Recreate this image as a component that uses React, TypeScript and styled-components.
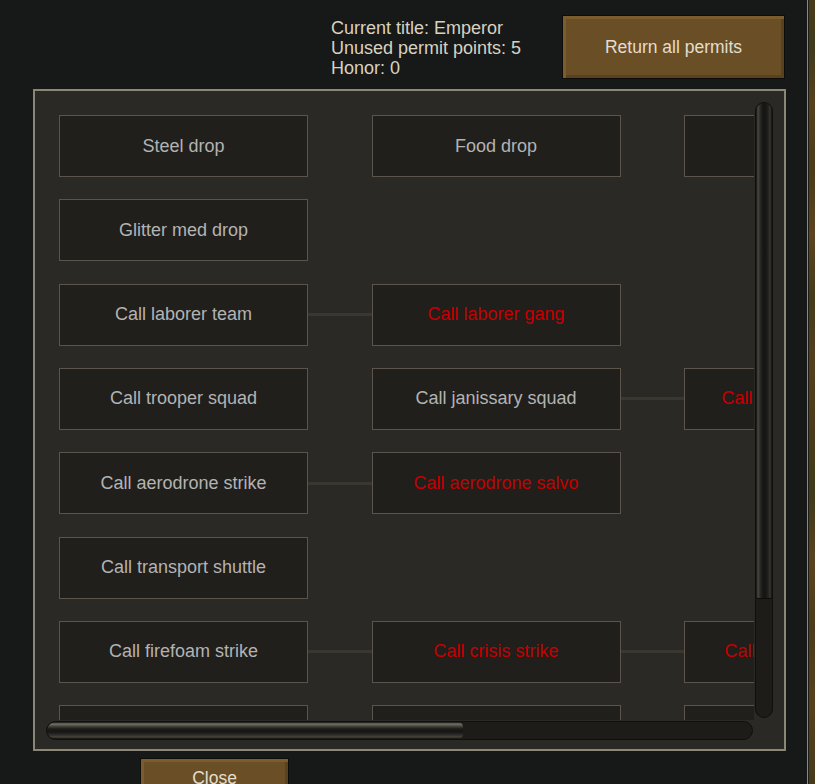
import React from "react";
import styled, { createGlobalStyle } from "styled-components";

const GlobalStyle = createGlobalStyle`
  html, body {
    margin: 0;
    padding: 0;
    background: #171918;
    overflow: hidden;
  }
  * { box-sizing: border-box; }
`;

const Page = styled.div`
  display: flex;
  width: 815px;
  height: 784px;
  overflow: hidden;
  background: #171918;
  font-family: "Liberation Sans", Arial, sans-serif;
`;

const Main = styled.div`
  width: 806px;
  display: flex;
  flex-direction: column;
`;

const Divider = styled.div`
  width: 3px;
  background: linear-gradient(90deg, #171918 0 1px, #8e897b 1px 2px, #20201b 2px);
`;

const Texture = styled.div`
  flex: 1;
  background:
    linear-gradient(
      180deg,
      #4b3a1c 0,
      #3f3a1d 6%,
      #56401f 13%,
      #4a3b1b 22%,
      #5c4322 30%,
      #443b1c 38%,
      #533f20 47%,
      #4a3a1b 55%,
      #3f3a1c 63%,
      #5a4221 72%,
      #4b3b1c 80%,
      #56401f 90%,
      #463a1c 100%
    );
`;

const Header = styled.div`
  display: flex;
  justify-content: flex-end;
  padding: 15px 21px 0 0;
  height: 79px;
`;

const Info = styled.div`
  width: 231px;
  padding-top: 3px;
  color: #d9d2c0;
  font-size: 18px;
  line-height: 20px;
`;

const BrownButton = styled.div<{ $w: number; $h: number }>`
  width: ${(p) => p.$w}px;
  height: ${(p) => p.$h}px;
  display: flex;
  align-items: center;
  justify-content: center;
  background: #6a4f26;
  border: 1px solid #0d0d0b;
  box-shadow: inset 3px 3px 0 #7a5c2e, inset -3px -3px 0 #59421f;
  color: #e4ddcd;
  font-size: 17.5px;
`;

const Panel = styled.div`
  margin: 10px 0 0 33px;
  width: 753px;
  height: 662px;
  border: 2px solid #8c8676;
  background: #2a2925;
  display: grid;
  grid-template-columns: 719px 20px;
  grid-template-rows: 629px 20px;
  padding: 0 10px 9px 0;
`;

const Viewport = styled.div`
  overflow: hidden;
  padding: 24px 0 0 24px;
`;

const Tree = styled.div`
  display: grid;
  grid-template-columns: 249px 63.5px 249px 63.5px 249px;
  grid-auto-rows: 62px;
  row-gap: 22.33px;
  width: 874px;
`;

const Cell = styled.div<{ $locked?: boolean }>`
  display: flex;
  align-items: center;
  justify-content: center;
  white-space: nowrap;
  background: #201f1c;
  border: 1px solid #5a544a;
  color: ${(p) => (p.$locked ? "#c40000" : "#b3b3b3")};
  font-size: 18px;
`;

const Slot = styled.div`
  display: flex;
  align-items: center;
`;

const Link = styled.div`
  width: 100%;
  height: 3px;
  background: #3a3731;
`;

const VScrollWrap = styled.div`
  display: flex;
  justify-content: center;
  padding: 11px 0 2px;
`;

const VTrack = styled.div`
  width: 18px;
  height: 100%;
  border-radius: 9px;
  background: #1d1c19;
  border: 1px solid #0f0f0d;
  overflow: hidden;
`;

const VThumb = styled.div`
  height: 496px;
  border-radius: 9px 9px 2px 2px;
  border-bottom: 1px solid #0b0b0a;
  background: linear-gradient(
    90deg,
    #0e0e0d 0,
    #4b4840 2px,
    #2c2a26 4px,
    #161614 7px,
    #161614 10px,
    #2a2824 13px,
    #3a3832 14px,
    #0e0e0d 16px
  );
`;

const HScrollWrap = styled.div`
  padding: 1px 1px 0 11px;
`;

const HTrack = styled.div`
  height: 19px;
  border-radius: 10px;
  background: #1d1c19;
  border: 1px solid #0f0f0d;
  overflow: hidden;
`;

const HThumb = styled.div`
  width: 416px;
  height: 100%;
  border-radius: 9px 5px 5px 9px;
  background: linear-gradient(
    180deg,
    #0e0e0d 0,
    #77736a 2px,
    #4a4740 4px,
    #1b1a18 7px,
    #161614 10px,
    #2f2d29 13px,
    #46433c 15px,
    #0e0e0d 17px
  );
`;

const Footer = styled.div`
  padding: 7px 0 0 140px;
`;

type Node = { label: string; locked?: boolean } | null;
type Row = { cells: [Node, Node, Node]; links: [boolean, boolean] };

const rows: Row[] = [
  { cells: [{ label: "Steel drop" }, { label: "Food drop" }, { label: "Silver drop" }], links: [false, false] },
  { cells: [{ label: "Glitter med drop" }, null, null], links: [false, false] },
  { cells: [{ label: "Call laborer team" }, { label: "Call laborer gang", locked: true }, null], links: [true, false] },
  {
    cells: [
      { label: "Call trooper squad" },
      { label: "Call janissary squad" },
      { label: "Call cataphract squad", locked: true },
    ],
    links: [false, true],
  },
  { cells: [{ label: "Call aerodrone strike" }, { label: "Call aerodrone salvo", locked: true }, null], links: [true, false] },
  { cells: [{ label: "Call transport shuttle" }, null, null], links: [false, false] },
  {
    cells: [
      { label: "Call firefoam strike" },
      { label: "Call crisis strike", locked: true },
      { label: "Call firefoam barrage", locked: true },
    ],
    links: [true, true],
  },
  {
    cells: [{ label: "Call shuttle" }, { label: "Call orbital strike" }, { label: "Call orbital salvo", locked: true }],
    links: [false, false],
  },
];

export default function App() {
  return (
    <>
      <GlobalStyle />
      <Page>
        <Main>
          <Header>
            <Info>
              <div>Current title: Emperor</div>
              <div>Unused permit points: 5</div>
              <div>Honor: 0</div>
            </Info>
            <BrownButton $w={223} $h={64}>Return all permits</BrownButton>
          </Header>
          <Panel>
            <Viewport>
              <Tree>
                {rows.map((row, ri) => (
                  <React.Fragment key={ri}>
                    {row.cells.map((c, ci) => (
                      <React.Fragment key={ci}>
                        {c ? <Cell $locked={c.locked}>{c.label}</Cell> : <Slot />}
                        {ci < 2 && <Slot>{row.links[ci] && <Link />}</Slot>}
                      </React.Fragment>
                    ))}
                  </React.Fragment>
                ))}
              </Tree>
            </Viewport>
            <VScrollWrap>
              <VTrack>
                <VThumb />
              </VTrack>
            </VScrollWrap>
            <HScrollWrap>
              <HTrack>
                <HThumb />
              </HTrack>
            </HScrollWrap>
          </Panel>
          <Footer>
            <BrownButton $w={149} $h={40}>Close</BrownButton>
          </Footer>
        </Main>
        <Divider />
        <Texture />
      </Page>
    </>
  );
}
